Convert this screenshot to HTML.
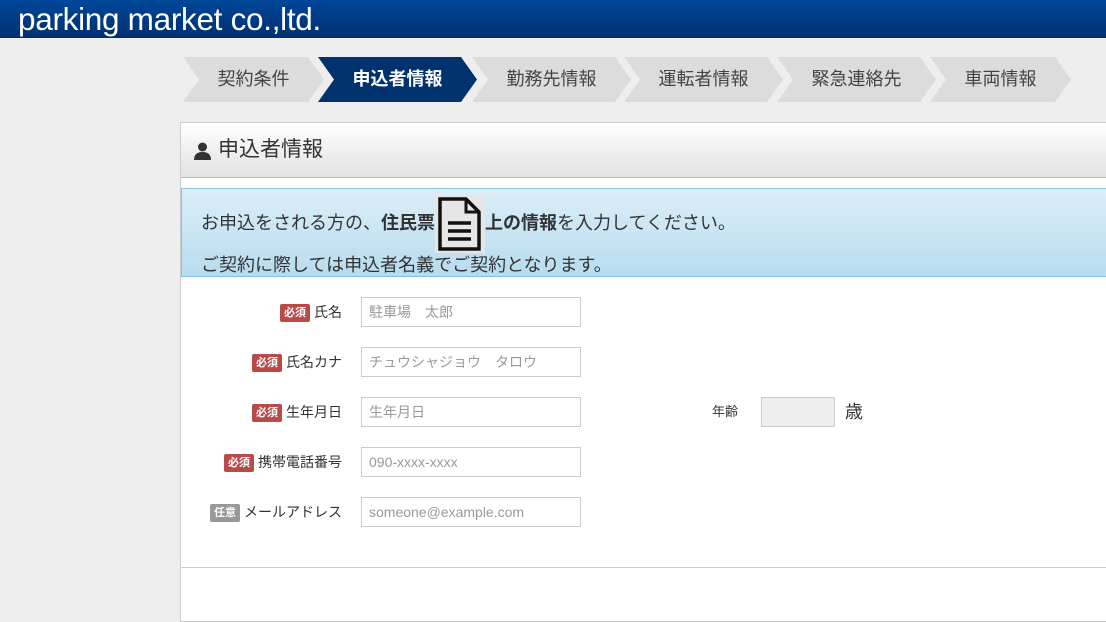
<!DOCTYPE html>
<html><head><meta charset="utf-8"><style>
*{margin:0;padding:0;box-sizing:border-box}
body{width:1106px;height:570px;overflow:hidden;background:#eee;font-family:"Liberation Sans","Noto Sans CJK JP",sans-serif;color:#333;position:relative}
.hdr{position:absolute;left:0;top:0;width:1106px;height:38px;background:linear-gradient(#00479a,#002f6e);color:#fff;font-size:31.5px;line-height:38px;padding-left:18px;letter-spacing:-0.3px}
.st{position:absolute;top:57px;height:45px;background:#dcdcdc;color:#444;font-size:18px;line-height:45px;text-align:center;clip-path:polygon(0 0,calc(100% - 16px) 0,100% 50%,calc(100% - 16px) 100%,0 100%,16px 50%)}
.st.on{background:#00336e;color:#fff;font-weight:bold}
.panel{position:absolute;left:180px;top:122px;width:940px;height:500px;background:#fff;border:1px solid #ccc}
.ph{height:55px;background:linear-gradient(#fff,#e2e2e2);border-bottom:1px solid #bbb;font-size:21px;line-height:54px;padding-left:37px;position:relative}
.info{position:absolute;left:0;top:65px;width:940px;height:89px;background:linear-gradient(#dceef8,#b7dcef);border:1px solid #7fc3e6;font-size:18px}
.info p{position:absolute;left:19px;white-space:nowrap}
.row{position:absolute;left:0;width:400px;height:30px}
.lab{position:absolute;right:239px;top:0;line-height:30px;font-size:14px;white-space:nowrap}
.b{display:inline-block;background:#b94a48;color:#fff;font-size:11px;font-weight:bold;line-height:18px;padding:0 4px;border-radius:2px;margin-right:4px;vertical-align:1px}
.b.g{background:#999}
.in{position:absolute;left:180px;top:0;width:220px;height:30px;border:1px solid #ccc;font-size:14px;color:#999;line-height:28px;padding-left:7px;background:#fff}
.doc{display:inline-block;width:50px;height:20px;position:relative;vertical-align:middle}
.doc span{position:absolute;left:0;top:-18px;width:50px;height:57px;background:#e6e6e6;display:block}
</style></head><body>
<div class="hdr">parking market co.,ltd.</div>
<div class="st" style="left:183px;width:141px">契約条件</div>
<div class="st on" style="left:318px;width:159px">申込者情報</div>
<div class="st" style="left:472px;width:159px">勤務先情報</div>
<div class="st" style="left:624px;width:159px">運転者情報</div>
<div class="st" style="left:777px;width:159px">緊急連絡先</div>
<div class="st" style="left:930px;width:141px">車両情報</div>
<div class="panel">
<div class="ph"><svg style="position:absolute;left:13px;top:19px" width="17" height="18" viewBox="0 0 17 18"><circle cx="8.5" cy="5" r="4.5" fill="#333"/><path d="M0 18 Q0 10 8.5 10 Q17 10 17 18Z" fill="#333"/></svg>申込者情報</div>
<div class="info">
<p style="top:20px">お申込をされる方の、<b>住民票</b><span class="doc"><span><svg width="50" height="57" viewBox="0 0 50 57"><path d="M5 3 H31 L44 16 V53 H5 Z" fill="none" stroke="#111" stroke-width="3.5"/><path d="M31 3 V16 H44" fill="none" stroke="#111" stroke-width="3"/><path d="M13 27 H36 M13 35 H36 M13 43 H36" stroke="#111" stroke-width="3.5"/></svg></span></span><b>上の情報</b>を入力してください。</p>
<p style="top:62px">ご契約に際しては申込者名義でご契約となります。</p>
</div>
<div class="row" style="top:174px"><div class="lab"><span class="b">必須</span>氏名</div><div class="in">駐車場　太郎</div></div>
<div class="row" style="top:224px"><div class="lab"><span class="b">必須</span>氏名カナ</div><div class="in">チュウシャジョウ　タロウ</div></div>
<div class="row" style="top:274px"><div class="lab"><span class="b">必須</span>生年月日</div><div class="in">生年月日</div></div>
<div class="row" style="top:324px"><div class="lab"><span class="b">必須</span>携帯電話番号</div><div class="in">090-xxxx-xxxx</div></div>
<div class="row" style="top:374px"><div class="lab"><span class="b g">任意</span>メールアドレス</div><div class="in">someone@example.com</div></div>
<div style="position:absolute;left:531px;top:274px;font-size:13px;line-height:30px">年齢</div>
<div style="position:absolute;left:580px;top:274px;width:74px;height:30px;background:#eee;border:1px solid #ccc"></div>
<div style="position:absolute;left:664px;top:274px;font-size:18px;line-height:30px">歳</div>
<div style="position:absolute;left:0;top:444px;width:940px;border-top:1px solid #ccc"></div>
</div>
</body></html>
